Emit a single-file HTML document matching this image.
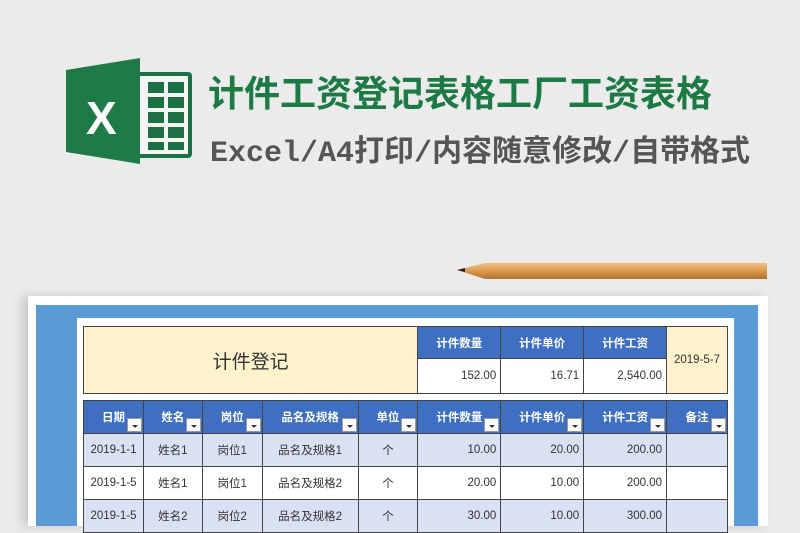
<!DOCTYPE html>
<html><head><meta charset="utf-8">
<style>
*{margin:0;padding:0;box-sizing:border-box}
body{width:800px;height:526px;overflow:hidden;background:#ebebeb;position:relative;font-family:"Liberation Sans","Noto Sans CJK SC",sans-serif}
.abs{position:absolute}
.title{left:208px;top:70px;font-size:36px;font-weight:bold;color:#1d7a45;letter-spacing:0px;white-space:nowrap;line-height:42px;font-family:"Noto Sans CJK SC",sans-serif}
.sub{left:210px;top:132px;font-size:30px;color:#555;white-space:nowrap;line-height:40px;font-family:"Liberation Mono","Noto Sans CJK SC",monospace;font-weight:bold}
.sub span{font-family:"Liberation Sans","Noto Sans CJK SC",sans-serif;font-weight:bold}
.paper{left:28px;top:296px;width:740px;height:230px;background:#fff;box-shadow:-6px 0 10px rgba(0,0,0,.15)}
.blue{left:36px;top:305px;width:722px;height:221px;background:#5b9bd5}
.inner{left:77px;top:318px;width:657px;height:208px;background:#fff}
table{border-collapse:collapse;position:absolute;font-size:11.5px;color:#333}
td{border:1px solid #444;text-align:center;position:relative}
.h{background:#3f6fc0;color:#fff;font-weight:bold}
.dd:after{content:"";position:absolute;right:1px;bottom:1px;width:13px;height:12px;background:#fff;border:1px solid #999}
.dd:before{content:"";position:absolute;right:5px;bottom:5px;border-left:3px solid transparent;border-right:3px solid transparent;border-top:3px solid #333;z-index:2}
.r{text-align:right;padding-right:4px}
.a td{background:#d9e1f2}
.b td{background:#fff}
.y{background:#fff2cc}
</style></head><body>
<svg class="abs" style="left:64px;top:56px" width="132" height="110" viewBox="0 0 132 110">
<rect x="70" y="16" width="58" height="86" rx="4" fill="#1d7044"/>
<rect x="74" y="20" width="50" height="78" fill="#f4f4f4"/>
<g fill="#1d7044">
<rect x="84" y="26" width="16" height="11"/><rect x="104" y="26" width="16" height="11"/>
<rect x="84" y="41" width="16" height="11"/><rect x="104" y="41" width="16" height="11"/>
<rect x="84" y="56" width="16" height="11"/><rect x="104" y="56" width="16" height="11"/>
<rect x="84" y="71" width="16" height="11"/><rect x="104" y="71" width="16" height="11"/>
<rect x="84" y="86" width="16" height="8"/><rect x="104" y="86" width="16" height="8"/>
</g>
<polygon points="2,14 76,2 76,108 2,96" fill="#1e7a47"/>
<text x="22" y="78" font-family="Liberation Sans" font-weight="bold" font-size="46" fill="#fff">X</text>
</svg>
<div class="abs title">计件工资登记表格工厂工资表格</div>
<div class="abs sub">Excel/A4<span>打印</span>/<span>内容随意修改</span>/<span>自带格式</span></div>
<svg class="abs" style="left:455px;top:260px" width="315" height="24">
<defs><linearGradient id="g" x1="0" y1="0" x2="0" y2="1"><stop offset="0" stop-color="#f0c080"/><stop offset=".5" stop-color="#dc9a4c"/><stop offset="1" stop-color="#b07030"/></linearGradient></defs>
<polygon points="2,10 30,3 312,3 312,19 30,19" fill="url(#g)"/>
<polygon points="2,10 10,8 10,12" fill="#222"/>
</svg>
<div class="abs paper"></div>
<div class="abs blue"></div>
<div class="abs inner"></div>
<table style="left:83px;top:326px;width:645px">
<tr style="height:32px"><td rowspan="2" class="y" style="width:335px;font-size:19px">计件登记</td><td class="h" style="width:83px">计件数量</td><td class="h" style="width:83px">计件单价</td><td class="h" style="width:83px">计件工资</td><td rowspan="2" class="y" style="width:61px">2019-5-7</td></tr>
<tr style="height:35px"><td class="r">152.00</td><td class="r">16.71</td><td class="r">2,540.00</td></tr>
</table>
<table style="left:83px;top:400px;width:645px">
<tr style="height:33px" class="h"><td class="h dd" style="width:60px">日期</td><td class="h dd" style="width:59px">姓名</td><td class="h dd" style="width:60px">岗位</td><td class="h dd" style="width:96px">品名及规格</td><td class="h dd" style="width:60px">单位</td><td class="h dd" style="width:83px">计件数量</td><td class="h dd" style="width:83px">计件单价</td><td class="h dd" style="width:83px">计件工资</td><td class="h dd" style="width:61px">备注</td></tr>
<tr style="height:33px" class="a"><td>2019-1-1</td><td>姓名1</td><td>岗位1</td><td>品名及规格1</td><td>个</td><td class="r">10.00</td><td class="r">20.00</td><td class="r">200.00</td><td></td></tr>
<tr style="height:33px" class="b"><td>2019-1-5</td><td>姓名1</td><td>岗位1</td><td>品名及规格2</td><td>个</td><td class="r">20.00</td><td class="r">10.00</td><td class="r">200.00</td><td></td></tr>
<tr style="height:33px" class="a"><td>2019-1-5</td><td>姓名2</td><td>岗位2</td><td>品名及规格2</td><td>个</td><td class="r">30.00</td><td class="r">10.00</td><td class="r">300.00</td><td></td></tr>
</table>
</body></html>
